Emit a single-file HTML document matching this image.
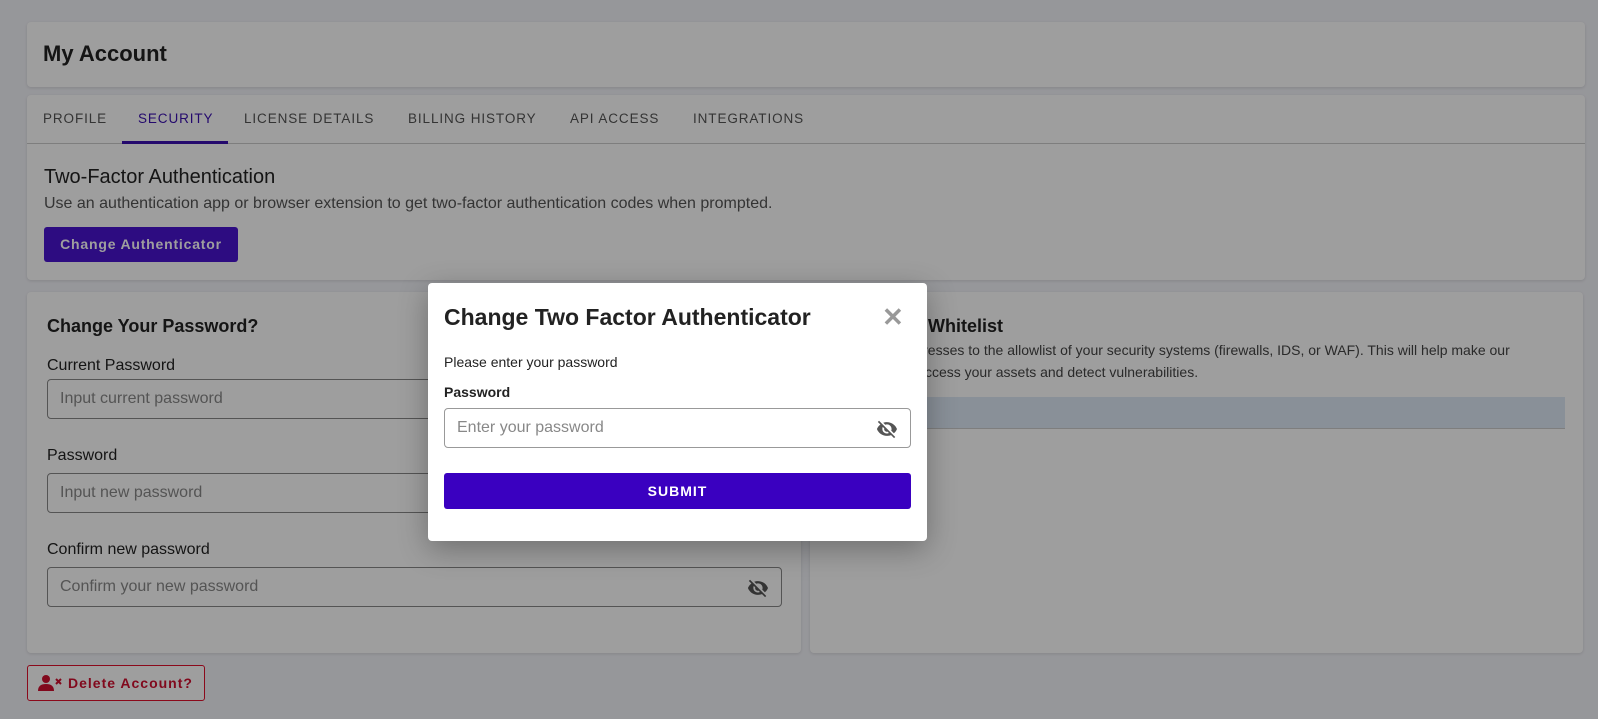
<!DOCTYPE html>
<html><head><style>
*{box-sizing:border-box;margin:0;padding:0}
body{width:1598px;height:719px;background:#f3f4f9;font-family:"Liberation Sans",Roboto,sans-serif;position:relative;overflow:hidden;color:#222}
.card{position:absolute;background:#fff;border-radius:4px;box-shadow:0 1px 3px rgba(0,0,0,.12)}
.tabs span{position:absolute;top:16px;font-size:13.5px;letter-spacing:0.9px;color:#555;font-weight:500}
.lbl{position:absolute;left:20px;font-size:16px;color:#222}
.inp{position:absolute;left:20px;width:735px;height:40px;border:1px solid #888;border-radius:4px;font-size:16px;color:#888;padding:10px 12px}
.ov{position:absolute;inset:0;background:rgba(0,0,0,.38)}
</style></head><body>
<div class="card" style="left:27px;top:22px;width:1558px;height:65px">
<div style="position:absolute;left:16px;top:19px;font-size:22px;font-weight:bold;color:#222">My Account</div></div>
<div class="card tabs" style="left:27px;top:95px;width:1558px;height:185px">
<span style="left:16px">PROFILE</span><span style="left:111px;color:#3a10b0">SECURITY</span><span style="left:217px">LICENSE DETAILS</span><span style="left:381px">BILLING HISTORY</span><span style="left:543px">API ACCESS</span><span style="left:666px">INTEGRATIONS</span>
<div style="position:absolute;left:0;right:0;top:48px;height:1px;background:#ccc"></div>
<div style="position:absolute;left:95px;width:106px;top:46px;height:3px;background:#3a10b0"></div>
<div style="position:absolute;left:17px;top:71px;font-size:20px;font-weight:500;color:#222">Two-Factor Authentication</div>
<div style="position:absolute;left:17px;top:100px;font-size:16px;color:#555">Use an authentication app or browser extension to get two-factor authentication codes when prompted.</div>
<div style="position:absolute;left:17px;top:132px;width:194px;height:35px;background:#4a14d0;border-radius:3px;color:#fff;font-size:14px;font-weight:bold;letter-spacing:0.8px;text-align:center;line-height:35px">Change Authenticator</div>
</div>
<div class="card" style="left:27px;top:292px;width:774px;height:361px">
<div style="position:absolute;left:20px;top:24px;font-size:18px;font-weight:bold">Change Your Password?</div>
<div class="lbl" style="top:65px">Current Password</div><div class="inp" style="top:87px">Input current password</div>
<div class="lbl" style="top:155px">Password</div><div class="inp" style="top:181px">Input new password</div>
<div class="lbl" style="top:249px">Confirm new password</div><div class="inp" style="top:275px">Confirm your new password
<svg style="position:absolute;right:12px;top:9px" width="22" height="22" viewBox="0 0 24 24"><path fill="#555" d="M12 7c2.8 0 5 2.2 5 5 0 .6-.1 1.3-.4 1.8l2.9 2.9c1.5-1.3 2.7-2.9 3.4-4.7-1.7-4.4-6-7.5-11-7.5-1.4 0-2.7.3-4 .7l2.2 2.2C10.7 7.1 11.4 7 12 7zM2 4.3l2.3 2.3.5.5C3.1 8.4 1.8 10.1 1 12c1.7 4.4 6 7.5 11 7.5 1.5 0 3-.3 4.4-.8l.4.4 2.9 2.9 1.3-1.3L3.3 3 2 4.3zm5.5 5.5l1.5 1.5c0 .2-.1.5-.1.7 0 1.7 1.3 3 3 3 .2 0 .4 0 .7-.1l1.5 1.5c-.7.3-1.4.5-2.2.5-2.8 0-5-2.2-5-5 0-.8.2-1.5.5-2.2z"/></svg></div>
</div>
<div class="card" style="left:810px;top:292px;width:773px;height:361px">
<div style="position:absolute;left:20px;top:24px;font-size:18px;font-weight:bold">IP Address Whitelist</div>
<div style="position:absolute;left:20px;top:47px;font-size:14px;color:#444;line-height:22px;width:700px">Add our IP addresses to the allowlist of your security systems (firewalls, IDS, or WAF). This will help make our scanners can access your assets and detect vulnerabilities.</div>
<div style="position:absolute;left:20px;right:18px;top:105px;height:32px;background:#dde8f5;border-bottom:1px solid #ccc"></div>
</div>
<div style="position:absolute;left:27px;top:665px;width:178px;height:36px;border:1px solid #e0102c;border-radius:3px;background:#fff;color:#d01030;font-size:14px;font-weight:bold;letter-spacing:1px;line-height:34px;padding-left:40px">Delete Account?
<svg style="position:absolute;left:10px;top:8px" width="24" height="18" viewBox="0 0 24 18"><circle cx="8" cy="5" r="4" fill="#d01030"/><path d="M0 17c0-5 3-7 8-7s8 2 8 7z" fill="#d01030"/><path d="M18 5l5 5M23 5l-5 5" stroke="#d01030" stroke-width="2"/></svg></div>
<div class="ov"></div>
<div style="position:absolute;left:428px;top:283px;width:499px;height:258px;background:#fff;border-radius:4px;box-shadow:0 8px 30px rgba(0,0,0,.3)">
<div style="position:absolute;left:16px;top:21px;font-size:23px;font-weight:bold;color:#222">Change Two Factor Authenticator</div>
<div style="position:absolute;left:454px;top:19px;font-size:26px;font-weight:bold;color:#999">✕</div>
<div style="position:absolute;left:16px;top:71px;font-size:14px;color:#222">Please enter your password</div>
<div style="position:absolute;left:16px;top:101px;font-size:14px;font-weight:bold;color:#222">Password</div>
<div style="position:absolute;left:16px;top:125px;width:467px;height:40px;border:1px solid #999;border-radius:4px;font-size:16px;color:#888;padding:10px 12px">Enter your password
<svg style="position:absolute;right:12px;top:9px" width="22" height="22" viewBox="0 0 24 24"><path fill="#555" d="M12 7c2.8 0 5 2.2 5 5 0 .6-.1 1.3-.4 1.8l2.9 2.9c1.5-1.3 2.7-2.9 3.4-4.7-1.7-4.4-6-7.5-11-7.5-1.4 0-2.7.3-4 .7l2.2 2.2C10.7 7.1 11.4 7 12 7zM2 4.3l2.3 2.3.5.5C3.1 8.4 1.8 10.1 1 12c1.7 4.4 6 7.5 11 7.5 1.5 0 3-.3 4.4-.8l.4.4 2.9 2.9 1.3-1.3L3.3 3 2 4.3zm5.5 5.5l1.5 1.5c0 .2-.1.5-.1.7 0 1.7 1.3 3 3 3 .2 0 .4 0 .7-.1l1.5 1.5c-.7.3-1.4.5-2.2.5-2.8 0-5-2.2-5-5 0-.8.2-1.5.5-2.2z"/></svg></div>
<div style="position:absolute;left:16px;top:190px;width:467px;height:36px;background:#3a00c0;border-radius:3px;color:#fff;font-size:14px;font-weight:bold;letter-spacing:1px;text-align:center;line-height:36px">SUBMIT</div>
</div>
</body></html>
